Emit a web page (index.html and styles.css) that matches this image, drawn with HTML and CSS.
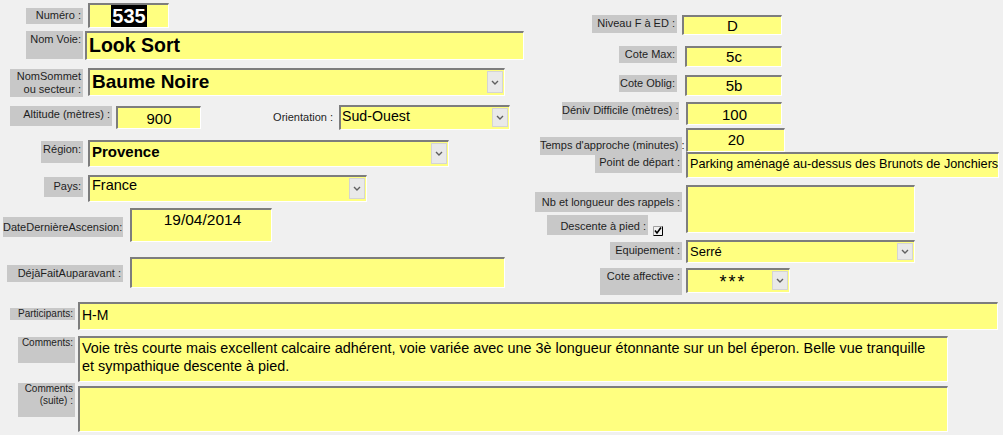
FILE: index.html
```html
<!DOCTYPE html>
<html lang="fr">
<head>
    <meta charset="UTF-8">
    <title>Fiche Voie</title>
    <link rel="stylesheet" href="styles.css">
</head>
<body>
    <div class="form">
        <div class="top">
            <div class="col-left">
                <div class="row r-numero">
                    <div class="lbl lbl-numero">Numéro :</div>
                    <div class="field f-numero"><span class="selected">535</span></div>
                </div>
                <div class="row r-voie">
                    <div class="lbl lbl-voie">Nom Voie:</div>
                    <div class="field f-voie">Look Sort</div>
                </div>
                <div class="row r-sommet">
                    <div class="lbl lbl-sommet">NomSommet<br>ou secteur :</div>
                    <div class="field combo f-sommet"><span class="value">Baume Noire</span><span class="drop"></span></div>
                </div>
                <div class="row r-altitude">
                    <div class="lbl lbl-altitude">Altitude (mètres) :</div>
                    <div class="field f-altitude">900</div>
                    <div class="plain lbl-orient">Orientation :</div>
                    <div class="field combo f-orient"><span class="value">Sud-Ouest</span><span class="drop"></span></div>
                </div>
                <div class="row r-region">
                    <div class="lbl lbl-region">Région:</div>
                    <div class="field combo f-region"><span class="value">Provence</span><span class="drop"></span></div>
                </div>
                <div class="row r-pays">
                    <div class="lbl lbl-pays">Pays:</div>
                    <div class="field combo f-pays"><span class="value">France</span><span class="drop"></span></div>
                </div>
                <div class="row r-date">
                    <div class="lbl lbl-date">DateDernièreAscension:</div>
                    <div class="field f-date">19/04/2014</div>
                </div>
                <div class="row r-deja">
                    <div class="lbl lbl-deja">DéjàFaitAuparavant :</div>
                    <div class="field f-deja"></div>
                </div>
            </div>

            <div class="col-right">
                <div class="row r-niveau">
                    <div class="lbl lbl-niveau">Niveau F à ED :</div>
                    <div class="field num f-niveau">D</div>
                </div>
                <div class="row r-cotemax">
                    <div class="lbl lbl-cote">Cote Max:</div>
                    <div class="field num f-cote">5c</div>
                </div>
                <div class="row r-coteoblig">
                    <div class="lbl lbl-cote">Cote Oblig:</div>
                    <div class="field num f-cote">5b</div>
                </div>
                <div class="row r-deniv">
                    <div class="lbl lbl-deniv">Déniv Difficile (mètres) :</div>
                    <div class="field num f-deniv">100</div>
                </div>
                <div class="row r-temps">
                    <div class="lbl lbl-temps">Temps d'approche (minutes) :</div>
                    <div class="field num f-temps">20</div>
                </div>
                <div class="row r-depart">
                    <div class="lbl lbl-depart">Point de départ :</div>
                    <div class="field f-depart">Parking aménagé au-dessus des Brunots de Jonchiers</div>
                </div>
                <div class="row r-rappels">
                    <div class="stack">
                        <div class="lbl lbl-rappels">Nb et longueur des rappels :</div>
                        <div class="descente">
                            <div class="lbl lbl-descente">Descente à pied :</div>
                            <svg class="check" width="10" height="10" viewBox="0 0 10 10">
                                <path d="M0.5 9.5 V0.5 H9.5" fill="none" stroke="#a0a0a0" stroke-width="1"/>
                                <path d="M0.5 9.5 H9.5 V0.5" fill="none" stroke="#000" stroke-width="1"/>
                                <path d="M2 4.5 L4 7 L8 1.5" fill="none" stroke="#000" stroke-width="1.6"/>
                            </svg>
                        </div>
                    </div>
                    <div class="field f-rappels"></div>
                </div>
                <div class="row r-equip">
                    <div class="lbl lbl-equip">Equipement :</div>
                    <div class="field combo f-equip"><span class="value">Serré</span><span class="drop"></span></div>
                </div>
                <div class="row r-affective">
                    <div class="lbl lbl-affective">Cote affective :</div>
                    <div class="field combo f-affective"><span class="value">***</span><span class="drop"></span></div>
                </div>
            </div>
        </div>

        <div class="bottom">
            <div class="row r-participants">
                <div class="lbl small lbl-participants">Participants:</div>
                <div class="field f-participants">H-M</div>
            </div>
            <div class="row r-comments">
                <div class="lbl small lbl-comments">Comments:</div>
                <div class="field memo f-comments">Voie très courte mais excellent calcaire adhérent, voie variée avec une 3è longueur étonnante sur un bel éperon. Belle vue tranquille<br>et sympathique descente à pied.</div>
            </div>
            <div class="row r-suite">
                <div class="lbl small lbl-suite">Comments<br>(suite) :</div>
                <div class="field memo f-suite"></div>
            </div>
        </div>
    </div>
</body>
</html>
```

FILE: styles.css
```css
/* Access-like form */
body, html {
    margin: 0;
    padding: 0;
    background: #f0f0f0;
    font-family: 'Liberation Sans', Arial, sans-serif;
    color: #000;
    overflow: hidden;
}

.form {
    width: 1003px;
    height: 435px;
}

.top {
    display: flex;
    height: 302px;
}

.col-left {
    width: 530px;
    flex: none;
    padding-top: 3px;
}

.col-right {
    width: 473px;
    flex: none;
    padding-top: 15px;
}

.row {
    display: flex;
    align-items: flex-start;
}

.row > * {
    flex: none;
}

/* labels */
.lbl {
    box-sizing: border-box;
    background: #c8c8c8;
    color: #1e1e1e;
    font-size: 11px;
    line-height: 13px;
    text-align: right;
    padding: 2px 2px 0 0;
    white-space: nowrap;
}

.lbl.small {
    font-size: 10px;
    line-height: 12px;
    padding-top: 0;
}

.plain {
    font-size: 11px;
    line-height: 13px;
    color: #1e1e1e;
    text-align: right;
    white-space: nowrap;
}

/* fields */
.field {
    box-sizing: border-box;
    background: #ffff80;
    border-style: solid;
    border-width: 2px 1px 1px 2px;
    border-color: #7d7d7d #ffffff #ffffff #7d7d7d;
    padding-left: 2px;
    white-space: nowrap;
    overflow: hidden;
}

.num {
    text-align: center;
    font-size: 15px;
    padding-left: 0;
}

.combo {
    display: flex;
    align-items: stretch;
}

.combo .value {
    flex: 1;
}

.drop {
    width: 16px;
    margin: 1px 1px 2px 0;
    box-sizing: border-box;
    background: #e9e9e9 url("data:image/svg+xml,%3Csvg xmlns='http://www.w3.org/2000/svg' width='8' height='5'%3E%3Cpath d='M1 1 L4 4 L7 1' fill='none' stroke='%23606060' stroke-width='1.4'/%3E%3C/svg%3E") no-repeat center;
    border: 1px solid #d4d4d4;
}

/* left column rows */
.r-numero { height: 28px; }
.r-voie { height: 37px; }
.r-sommet { height: 37px; }
.r-altitude { height: 35px; }
.r-region { height: 35px; }
.r-pays { height: 33px; }
.r-date { height: 49px; }
.r-deja { height: 31px; }

.lbl-numero { margin: 5px 0 0 26px; width: 57px; height: 16px; padding-top: 1px; }
.f-numero {
    margin-left: 5px;
    width: 81px;
    height: 25px;
    text-align: center;
    font-weight: bold;
    font-size: 20px;
    line-height: 22px;
    padding-left: 0;
}
.selected {
    background: #000;
    color: #fff;
    padding: 0 1px;
}

.lbl-voie { margin-left: 26px; width: 57px; height: 28px; }
.f-voie {
    margin-left: 2px;
    width: 439px;
    height: 29px;
    font-weight: bold;
    font-size: 19.5px;
    line-height: 25px;
}

.lbl-sommet { margin: 1px 0 0 10px; width: 73px; height: 28px; padding-top: 1px; }
.f-sommet {
    margin-left: 5px;
    width: 417px;
    height: 28px;
    font-weight: bold;
    font-size: 19px;
    line-height: 24px;
}

.lbl-altitude { margin: 1px 0 0 10px; width: 102px; height: 20px; }
.f-altitude {
    margin: 1px 0 0 4px;
    width: 85px;
    height: 23px;
    text-align: center;
    font-size: 15px;
    line-height: 21px;
    padding-left: 0;
}
.lbl-orient { margin: 6px 0 0 69px; width: 63px; }
.f-orient {
    margin-left: 6px;
    width: 171px;
    height: 25px;
    font-size: 14.2px;
    line-height: 19px;
    padding-left: 1px;
}

.lbl-region { margin: 1px 0 0 41px; width: 42px; height: 22px; }
.f-region {
    margin-left: 5px;
    width: 361px;
    height: 27px;
    font-weight: bold;
    font-size: 15px;
    line-height: 20px;
}

.lbl-pays { margin: 2px 0 0 44px; width: 39px; height: 20px; padding-top: 3px; }
.f-pays {
    margin-left: 5px;
    width: 279px;
    height: 27px;
    font-size: 14.5px;
    line-height: 17px;
}

.lbl-date { margin: 9px 0 0 3px; width: 120px; height: 20px; padding-top: 4px; }
.f-date {
    margin-left: 7px;
    width: 142px;
    height: 34px;
    text-align: center;
    font-size: 15.5px;
    line-height: 20px;
}

.lbl-deja { margin: 8px 0 0 7px; width: 116px; height: 17px; }
.f-deja { margin-left: 7px; width: 375px; height: 31px; }

/* right column rows */
.r-niveau { height: 31px; }
.r-cotemax { height: 29px; }
.r-coteoblig { height: 27px; }
.r-deniv { height: 26px; }
.r-temps { height: 24px; }
.r-depart { height: 33px; }
.r-rappels { height: 55px; }
.r-equip { height: 28px; }
.r-affective { height: 25px; }

.lbl-niveau { margin-left: 62px; width: 85px; height: 18px; }
.f-niveau { margin-left: 5px; width: 100px; height: 20px; line-height: 17px; }

.lbl-cote { margin-left: 89px; width: 58px; height: 17px; }
.f-cote { margin-left: 8px; width: 97px; height: 21px; line-height: 18px; }

.lbl-deniv { margin-left: 32px; width: 117px; height: 18px; }
.f-deniv { margin-left: 7px; width: 96px; height: 23px; line-height: 21px; }

.lbl-temps { margin: 9px 0 0 10px; width: 142px; height: 18px; }
.f-temps { margin-left: 4px; width: 99px; height: 24px; line-height: 19px; }

.lbl-depart { margin: 2px 0 0 65px; width: 87px; height: 19px; }
.f-depart {
    margin-left: 4px;
    width: 313px;
    height: 26px;
    font-size: 12.7px;
    line-height: 21px;
}

.stack {
    margin-left: 5px;
    width: 147px;
}
.lbl-rappels { margin-top: 7px; width: 147px; height: 20px; padding-top: 4px; }
.descente {
    display: flex;
    align-items: flex-start;
    margin-top: 3px;
}
.lbl-descente { flex: none; margin-left: 12px; width: 101px; height: 20px; padding-top: 5px; }
.check { flex: none; margin: 11px 0 0 5px; }
.f-rappels { margin-left: 4px; width: 229px; height: 48px; }

.lbl-equip { margin: 2px 0 0 80px; width: 72px; height: 18px; }
.f-equip {
    margin-left: 4px;
    width: 229px;
    height: 23px;
    font-size: 13px;
    line-height: 19px;
}

.lbl-affective { margin-left: 70px; width: 82px; height: 27px; }
.f-affective {
    margin-left: 4px;
    width: 104px;
    height: 25px;
    font-size: 18px;
    line-height: 24px;
}
.f-affective .value {
    text-align: center;
    letter-spacing: 2px;
    padding-left: 4px;
}

/* bottom rows */
.r-participants { height: 34px; }
.r-comments { height: 50px; }
.r-suite { height: 46px; }

.lbl-participants { margin: 6px 0 0 10px; width: 65px; height: 12px; }
.f-participants {
    margin-left: 3px;
    width: 920px;
    height: 28px;
    font-size: 14px;
    line-height: 22px;
}

.memo {
    white-space: normal;
    font-size: 14.4px;
    line-height: 18px;
    padding: 1px 0 0 2px;
}

.lbl-comments { margin: 1px 0 0 18px; width: 57px; height: 26px; padding-top: 4px; }
.f-comments { margin-left: 3px; width: 870px; height: 46px; }

.lbl-suite { margin: -3px 0 0 18px; width: 57px; height: 34px; padding-top: 4px; }
.f-suite { margin-left: 3px; width: 870px; height: 46px; }
```
